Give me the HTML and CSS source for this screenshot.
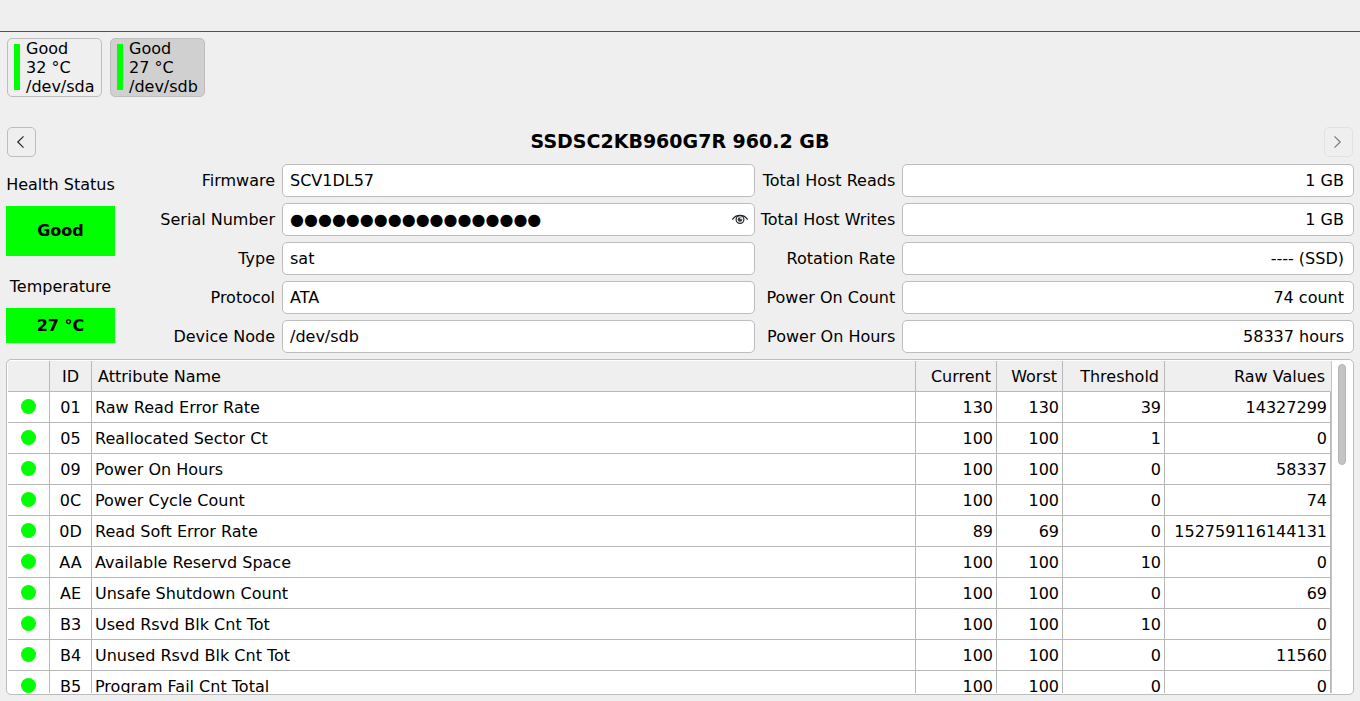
FILE: index.html
```html
<!DOCTYPE html>
<html lang="en">
<head>
<meta charset="utf-8">
<title>Disk Health</title>
<link rel="stylesheet" href="styles.css">
</head>
<body>
<header class="menubar"></header>
<nav class="disks">
  <button class="disk" type="button"><span class="disk-bar"></span><span>Good<br>32 °C<br>/dev/sda</span></button>
  <button class="disk disk-active" type="button"><span class="disk-bar"></span><span>Good<br>27 °C<br>/dev/sdb</span></button>
</nav>
<main class="content">
  <div class="title-row">
    <button class="arrow" type="button" aria-label="Previous disk"><svg width="16" height="16" viewBox="0 0 16 16"><path d="M9.500 2.300 3.800 8l5.700 5.700"/></svg></button>
    <h1 class="title">SSDSC2KB960G7R 960.2 GB</h1>
    <button class="arrow" type="button" aria-label="Next disk" disabled><svg width="16" height="16" viewBox="0 0 16 16"><path d="M4.500 2.300 10.200 8l-5.700 5.700"/></svg></button>
  </div>
  <section class="details">
    <div class="status">
      <span class="status-label">Health Status</span>
      <strong class="badge badge-health">Good</strong>
      <span class="status-label">Temperature</span>
      <strong class="badge badge-temp">27 °C</strong>
    </div>
    <div class="fields">
      <label for="firmware">Firmware</label><input class="field" id="firmware" readonly value="SCV1DL57">
      <label for="reads">Total Host Reads</label><input class="field field-num" id="reads" readonly value="1 GB">
      <label for="serial">Serial Number</label>
      <div class="field secret"><input class="secret-input" id="serial" readonly value="●●●●●●●●●●●●●●●●●●"><button class="reveal" type="button" aria-label="Show serial number"><svg width="16" height="16" viewBox="0 0 16 16"><path d="M0.400 7.600C2 4.900 4.700 3.400 8 3.400s6 1.500 7.600 4.200"/><circle cx="8" cy="7.500" r="3.900"/><circle class="pupil" cx="8" cy="7.500" r="2.300"/><path class="glint" d="M8.200 7.300V5.700h1.600v1.600z"/></svg></button></div>
      <label for="writes">Total Host Writes</label><input class="field field-num" id="writes" readonly value="1 GB">
      <label for="type">Type</label><input class="field" id="type" readonly value="sat">
      <label for="rotation">Rotation Rate</label><input class="field field-num" id="rotation" readonly value="---- (SSD)">
      <label for="protocol">Protocol</label><input class="field" id="protocol" readonly value="ATA">
      <label for="count">Power On Count</label><input class="field field-num" id="count" readonly value="74 count">
      <label for="node">Device Node</label><input class="field" id="node" readonly value="/dev/sdb">
      <label for="hours">Power On Hours</label><input class="field field-num" id="hours" readonly value="58337 hours">
    </div>
  </section>
  <section class="panel">
    <div class="viewport">
      <table class="attrs">
        <colgroup><col class="c-dot"><col class="c-id"><col><col class="c-current"><col class="c-worst"><col class="c-threshold"><col class="c-raw"></colgroup>
        <thead><tr><th></th><th class="mid">ID</th><th class="name">Attribute Name</th><th>Current</th><th>Worst</th><th>Threshold</th><th>Raw Values</th></tr></thead>
        <tbody>
          <tr><td><i class="dot"></i></td><td class="mid">01</td><td class="name">Raw Read Error Rate</td><td>130</td><td>130</td><td>39</td><td>14327299</td></tr>
          <tr><td><i class="dot"></i></td><td class="mid">05</td><td class="name">Reallocated Sector Ct</td><td>100</td><td>100</td><td>1</td><td>0</td></tr>
          <tr><td><i class="dot"></i></td><td class="mid">09</td><td class="name">Power On Hours</td><td>100</td><td>100</td><td>0</td><td>58337</td></tr>
          <tr><td><i class="dot"></i></td><td class="mid">0C</td><td class="name">Power Cycle Count</td><td>100</td><td>100</td><td>0</td><td>74</td></tr>
          <tr><td><i class="dot"></i></td><td class="mid">0D</td><td class="name">Read Soft Error Rate</td><td>89</td><td>69</td><td>0</td><td>152759116144131</td></tr>
          <tr><td><i class="dot"></i></td><td class="mid">AA</td><td class="name">Available Reservd Space</td><td>100</td><td>100</td><td>10</td><td>0</td></tr>
          <tr><td><i class="dot"></i></td><td class="mid">AE</td><td class="name">Unsafe Shutdown Count</td><td>100</td><td>100</td><td>0</td><td>69</td></tr>
          <tr><td><i class="dot"></i></td><td class="mid">B3</td><td class="name">Used Rsvd Blk Cnt Tot</td><td>100</td><td>100</td><td>10</td><td>0</td></tr>
          <tr><td><i class="dot"></i></td><td class="mid">B4</td><td class="name">Unused Rsvd Blk Cnt Tot</td><td>100</td><td>100</td><td>0</td><td>11560</td></tr>
          <tr><td><i class="dot"></i></td><td class="mid">B5</td><td class="name">Program Fail Cnt Total</td><td>100</td><td>100</td><td>0</td><td>0</td></tr>
        </tbody>
      </table>
    </div>
    <div class="track"><div class="thumb"></div></div>
  </section>
</main>
</body>
</html>
```
FILE: styles.css
```css
* { box-sizing: border-box; }
body {
  margin: 0;
  height: 100vh;
  display: flex;
  flex-direction: column;
  overflow: hidden;
  background: #efefef;
  color: #000;
  font: 16px/19px "DejaVu Sans", sans-serif;
}
button, input { font: inherit; color: inherit; }
button { padding: 0; background: #efefef; }
svg { display: block; fill: none; stroke: #232629; stroke-width: 1.2; }
.menubar { height: 32px; flex: none; border-bottom: 1px solid #4f5254; }

.disks { display: flex; gap: 8px; padding: 6px 7px 30px; }
.disk {
  display: flex;
  align-items: center;
  gap: 6px;
  width: 95px;
  height: 59px;
  padding: 0 6px 1px;
  border: 1px solid #bdbdbd;
  border-radius: 5px;
  text-align: left;
  white-space: nowrap;
}
.disk-active { background: #d0d0d0; }
.disk-bar { width: 6px; height: 46px; flex: none; background: #0f0; }

.content { flex: 1; min-height: 0; display: flex; flex-direction: column; padding: 0 6px 6px; }
.title-row { display: flex; align-items: center; justify-content: space-between; padding: 0 1px; margin-bottom: 7px; }
.title { margin: 0; padding-bottom: 2px; font-size: 19px; line-height: 24px; }
.arrow {
  display: flex;
  align-items: center;
  justify-content: center;
  width: 29px;
  height: 30px;
  border: 1px solid #bdbdbd;
  border-radius: 5px;
}
.arrow:disabled { border-color: #e2e2e2; }
.arrow:disabled svg { stroke: #777a7d; }

.details { display: flex; margin-bottom: 6px; }
.status { display: flex; flex-direction: column; width: 109px; padding-top: 11px; text-align: center; white-space: nowrap; }
.status-label { margin-bottom: 12px; }
.badge { display: flex; align-items: center; justify-content: center; background: #0f0; }
.badge-health { height: 50px; padding-bottom: 2px; margin-bottom: 21px; }
.badge-temp { height: 35px; }
.fields {
  flex: 1;
  display: grid;
  grid-template-columns: 161px 22fr 135px 21fr;
  gap: 6px;
  align-items: center;
  text-align: right;
  white-space: nowrap;
}
.fields label { display: flex; justify-content: flex-end; padding-right: 1px; }
.field {
  width: 100%;
  min-width: 0;
  height: 33px;
  padding: 0 7px;
  border: 1px solid #bdbdbd;
  border-radius: 5px;
  background: #fff;
  outline: 0;
}
.field-num { padding: 0 9px; text-align: right; }
.secret { display: flex; align-items: center; padding-right: 6px; }
.secret-input { flex: 1; min-width: 0; padding: 0; border: 0; outline: 0; }
.reveal { border: 0; background: none; }
.reveal .pupil { fill: #31363b; stroke: none; }
.reveal .glint { fill: #fff; stroke: none; }

.panel {
  flex: 1;
  min-height: 0;
  display: flex;
  padding: 1px;
  overflow: hidden;
  border: 1px solid #bdbdbd;
  border-radius: 5px;
  background: #fff;
}
.viewport { flex: 1; overflow: hidden; border-right: 1px solid #c4c4c4; }
.attrs { width: 100%; table-layout: fixed; border-collapse: separate; border-spacing: 0; text-align: right; white-space: nowrap; }
.c-dot, .c-id { width: 42px; }
.c-current { width: 81px; }
.c-worst { width: 66px; }
.c-threshold { width: 102px; }
.c-raw { width: 166px; }
.attrs th, .attrs td { height: 31px; padding: 0 3px; border: solid #b8b8b8; border-width: 0 1px 1px 0; }
.attrs th { padding: 0 5px; background: #efefef; font-weight: normal; }
.attrs th:last-child { border-right-color: #efefef; }
.attrs .name { text-align: left; }
.attrs th.name { padding-left: 6px; }
.attrs .mid { text-align: center; }
.dot { display: block; width: 15px; height: 15px; margin: 0 auto 1px; border-radius: 50%; background: #0f0; }
.track { width: 20px; padding: 3px 6px; }
.thumb { width: 8px; height: 101px; border: 1px solid #b4b4b4; border-radius: 4px; background: #c4c4c4; }
```
